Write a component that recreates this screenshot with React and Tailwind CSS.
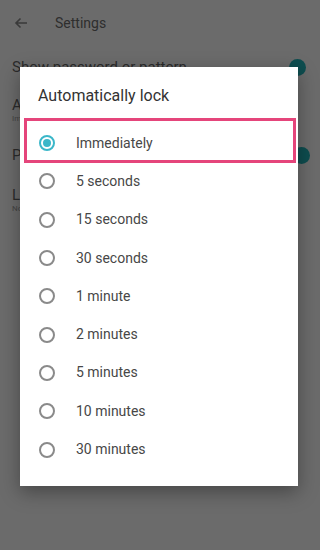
import React from "react";

const options = [
  "Immediately",
  "5 seconds",
  "15 seconds",
  "30 seconds",
  "1 minute",
  "2 minutes",
  "5 minutes",
  "10 minutes",
  "30 minutes",
];

const Radio = ({ checked }) => (
  <span
    className={`flex h-[16px] w-[16px] items-center justify-center rounded-full border-2 ${
      checked ? "border-[#3bb7c9]" : "border-[#8a8a8a]"
    }`}
  >
    {checked && <span className="h-[8px] w-[8px] rounded-full bg-[#3bb7c9]" />}
  </span>
);

export default function App() {
  return (
    <div
      className="relative h-[550px] w-[320px] overflow-hidden bg-[#6b6b6b] text-[#2b2b2b]"
      style={{ fontFamily: "Roboto, 'Noto Sans', sans-serif" }}
    >
      {/* settings screen behind the dim */}
      <div className="flex h-[46px] items-center pl-[14px]">
        <svg width="14" height="12" viewBox="0 0 14 12" fill="none" stroke="#3a3a3a" strokeWidth="1.6">
          <path d="M13 6H2M6.5 1.5L2 6l4.5 4.5" />
        </svg>
        <span className="ml-[27px] text-[14px] text-[#2e2e2e]">Settings</span>
      </div>
      <div className="relative flex h-[42px] items-center pl-[12px] pr-[14px]">
        <span className="text-[15px]">Show password or pattern</span>
        <span className="ml-auto h-[17px] w-[17px] rounded-full bg-[#0e4d4f]" />
      </div>
      <div className="flex h-[44px] flex-col justify-center pl-[12px]">
        <span className="text-[15px] leading-[18px]">A</span>
        <span className="text-[8px] leading-[10px] text-[#444]">Im</span>
      </div>
      <div className="flex h-[46px] items-center pl-[12px] pr-[10px]">
        <span className="text-[15px]">P</span>
        <span className="ml-auto h-[17px] w-[17px] rounded-full bg-[#0e4d4f]" />
      </div>
      <div className="flex h-[44px] flex-col justify-center pl-[12px]">
        <span className="text-[15px] leading-[18px]">L</span>
        <span className="text-[8px] leading-[10px] text-[#444]">No</span>
      </div>

      {/* dialog */}
      <div className="absolute left-[20px] top-[67px] h-[419px] w-[278px] bg-white shadow-[0_6px_18px_rgba(0,0,0,0.35)]">
        <div className="h-[57px] pl-[18px] pt-[19px] text-[16px] leading-[20px] text-[#333]">
          Automatically lock
        </div>
        <div className="flex flex-col">
          {options.map((o, i) => (
            <div key={o} className="flex h-[38.3px] items-center pl-[19px]">
              <Radio checked={i === 0} />
              <span className="ml-[21px] text-[14px] text-[#474747]">{o}</span>
            </div>
          ))}
        </div>
        <div className="absolute left-[4px] top-[51px] h-[45px] w-[272px] border-[3px] border-[#e5457b]" />
      </div>
    </div>
  );
}
